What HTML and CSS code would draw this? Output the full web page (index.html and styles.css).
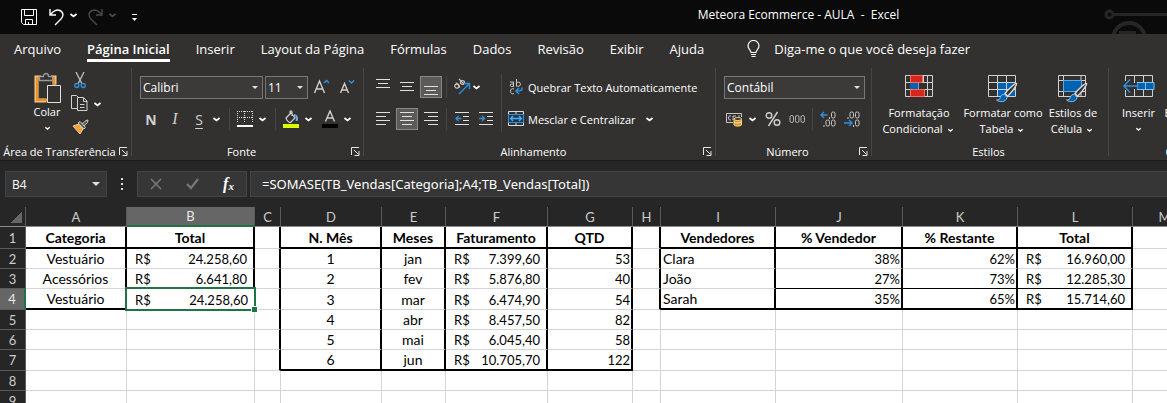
FILE: index.html
```
<!DOCTYPE html>
<html lang="pt-BR">
<head>
    <meta charset="UTF-8">
    <meta name="viewport" content="width=device-width, initial-scale=1.0">
    <title>Meteora Ecommerce - AULA - Excel</title>
    <link rel="stylesheet" href="styles.css">
</head>
<body>
    <!-- shared shapes -->
    <svg class="defs" aria-hidden="true">
        <symbol id="chevron" viewBox="0 0 11 22"><path d="M2.500 10l3 2.500 3-2.500" fill="none" stroke="#fff" stroke-width="1.700"/></symbol>
        <symbol id="launch" viewBox="0 0 9 9"><path d="M.500 8V.500H8M3 3l4.500 4.500M8 4v4.500H3.500" fill="none" stroke="#e8e8e8"/></symbol>
        <symbol id="brush" viewBox="0 0 23 21"><path d="M21.500 1.500c1 1-6 10.500-9 12.500l-2.500-2.500c2-3 10.500-11 11.500-10z" fill="#323130" stroke="#d8d8d8" stroke-width="1.500"/><path d="M9.500 12.500c-2-.500-4 1-4.200 3-.3 2-1.800 2.500-3.800 2.500 3 2.500 9.500 2.500 10.500-2.500z" fill="#0063b1" stroke="#83beec"/></symbol>
    </svg>

    <header class="titlebar">
        <div class="quick">
            <button aria-label="Salvar"><svg width="17" height="17" viewBox="0 0 17 17" fill="none" stroke="#fff"><path d="M.500.500h15v15h-13l-2-2zM3.500.500v6h9v-6M4.500 15.500v-5h7v5M7.500 13v2.500"/></svg></button>
            <button aria-label="Desfazer"><svg width="28" height="17" viewBox="0 0 28 17" fill="none" stroke="#fff"><path d="M1 0v6h6M1.500 5.500C4 2 8 0 11 1.500c4 2 3.500 6 1 8.500L6 16" stroke-width="1.400"/><path d="M21.500 5l3 2.500 3-2.500" stroke-width="1.700"/></svg></button>
            <button aria-label="Refazer"><svg width="28" height="17" viewBox="0 0 28 17" fill="none" stroke="#4a4a4a"><path d="M14 0v6H8M13.500 5.500C11 2 7 0 4 1.500 0 3.500.500 7.500 3 10l6 6" stroke-width="1.400"/><path d="M21.500 5l3 2.500 3-2.500" stroke-width="1.700"/></svg></button>
            <button aria-label="Personalizar"><svg width="7" height="17" viewBox="0 0 7 17"><path d="M1 5.500h5" stroke="#fff"/><path d="M1 9h5l-2.500 3z" fill="#fff"/></svg></button>
        </div>
        <h1>Meteora Ecommerce - AULA &nbsp;-&nbsp; Excel</h1>
        <svg class="art" width="64" height="34" viewBox="0 0 64 34" fill="none" stroke="#262626">
            <circle cx="6.500" cy="14.500" r="3.500" stroke-width="3"/><path d="M10 14.500h54" stroke-width="3"/>
            <circle cx="26" cy="39" r="16" stroke-width="4"/><path d="M16 33h17" stroke-width="4"/>
        </svg>
    </header>

    <nav class="tabs">
        <button>Arquivo</button>
        <button class="active">Página Inicial</button>
        <button>Inserir</button>
        <button>Layout da Página</button>
        <button>Fórmulas</button>
        <button>Dados</button>
        <button>Revisão</button>
        <button>Exibir</button>
        <button>Ajuda</button>
        <button class="tell"><svg width="13" height="18" viewBox="0 0 13 18" fill="none" stroke="#fff"><path d="M4 12.500c0-2-3-3.500-3-6.500a5.500 5.500 0 0 1 11 0c0 3-3 4.500-3 6.500zM4 14.500h5M4.500 16.500h4" stroke-width="1.200"/></svg>Diga-me o que você deseja fazer</button>
    </nav>

    <div class="ribbon">
        <section class="group clipboard">
            <div class="tools">
                <button class="big"><svg width="30" height="32" viewBox="0 0 30 32"><path d="M9 5.500H4.500v23h10M19 5.500h3.500v7" fill="none" stroke="#f7cf8c" stroke-width="4"/><path d="M9 6H5v22h10M19 6h3v7" fill="none" stroke="#e8912d" stroke-width="2.500"/><path d="M7.500 8.500v-4h4c0-4 5-4 5 0h4v4z" fill="#323130" stroke="#9a9a9a" stroke-width="1.300"/><path d="M15.500 13.500h13v17h-13z" fill="#323130" stroke="#e0e0e0"/></svg>
                    <span>Colar</span><svg width="11" height="16"><use href="#chevron"/></svg></button>
                <div class="stack">
                    <button aria-label="Recortar"><svg width="12" height="17" viewBox="0 0 12 17" fill="none"><path d="M2 0l6 12M10 0L4 12" stroke="#b8b8b8" stroke-width="1.400"/><circle cx="2.800" cy="13.500" r="2" stroke="#2f8fdb" stroke-width="1.400"/><circle cx="9.200" cy="13.500" r="2" stroke="#2f8fdb" stroke-width="1.400"/></svg></button>
                    <button class="split" aria-label="Copiar"><svg width="17" height="17" viewBox="0 0 17 17" fill="#323130" stroke="#d0d0d0"><path d="M6 13.500H.500V.500h5l3 3"/><path d="M6.500 2.500h6l3.500 3.500v9.500H6.500zM12.500 2.500v4H16M9 9.500h4.500M9 12.500h4.500"/></svg><svg width="11" height="22"><use href="#chevron"/></svg></button>
                    <button aria-label="Pincel de Formatação"><svg width="17" height="16" viewBox="0 0 17 16"><path d="M1 7l6-2 4 5-3 5z" fill="#f0a33c" stroke="#f8cf91"/><path d="M6 4l2-1.500 5.500 6L12 10zM10 5l4-3.500 2-.500-.500 2.500-3.500 3.500" fill="#555" stroke="#ccc"/></svg></button>
                </div>
            </div>
            <footer><span>Área de Transferência</span><button aria-label="Opções"><svg width="9" height="9"><use href="#launch"/></svg></button></footer>
        </section>

        <section class="group font">
            <div class="tools rows">
                <div class="row">
                    <span class="combo name"><select aria-label="Fonte"><option>Calibri</option></select></span>
                    <span class="combo size"><select aria-label="Tamanho"><option>11</option></select></span>
                    <button aria-label="Aumentar fonte"><svg width="18" height="18" viewBox="0 0 18 18" fill="none"><path d="M1.500 15l5-12 5 12M3.500 11h6" stroke="#d0d0d0" stroke-width="1.400"/><path d="M11 5l2.500-2.500L16 5" stroke="#2f8fdb" stroke-width="1.500"/></svg></button>
                    <button aria-label="Diminuir fonte"><svg width="18" height="18" viewBox="0 0 18 18" fill="none"><path d="M2.500 15l4-9.500 4 9.500M4 12h5" stroke="#d0d0d0" stroke-width="1.400"/><path d="M11 2.500L13.500 5 16 2.500" stroke="#2f8fdb" stroke-width="1.500"/></svg></button>
                </div>
                <div class="row format">
                    <button class="bold">N</button>
                    <button class="italic">I</button>
                    <button class="under">S</button><button class="drop" aria-label="Sublinhado"><svg width="11" height="22"><use href="#chevron"/></svg></button>
                    <i class="sep"></i>
                    <button aria-label="Bordas"><svg width="16" height="16" viewBox="0 0 16 16" fill="none" stroke="#d8d8d8"><path d="M.500 0v12M15.500 0v12M0 .500h16M7.500 0v12M0 6.500h16" stroke-dasharray="1 1"/><path d="M0 15h16" stroke="#fff" stroke-width="2"/></svg></button><button class="drop" aria-label="Mais bordas"><svg width="11" height="22"><use href="#chevron"/></svg></button>
                    <i class="sep"></i>
                    <button aria-label="Cor de preenchimento"><svg width="16" height="18" viewBox="0 0 16 18"><path d="M3 8l5-5 4 5-4.500 4.500c-1 .5-4-2-4.500-4.500zM7 5V1.500c1-1 2-.5 2 .5v4" fill="none" stroke="#d0d0d0" stroke-width="1.200"/><path d="M11 5c3 0 3.500 3 2.500 6" fill="none" stroke="#69aee8" stroke-width="2"/><path d="M0 14h16v4H0z" fill="#dcff00"/></svg></button><button class="drop" aria-label="Mais cores"><svg width="11" height="22"><use href="#chevron"/></svg></button>
                    <button class="fontcolor" aria-label="Cor da fonte"><svg width="16" height="18" viewBox="0 0 16 18"><path d="M3.500 11.500L8 1l4.500 10.500M5 8h6" fill="none" stroke="#d0d0d0" stroke-width="1.400"/><path d="M0 14h16v4H0z"/></svg></button><button class="drop" aria-label="Mais cores de fonte"><svg width="11" height="22"><use href="#chevron"/></svg></button>
                </div>
            </div>
            <footer><span>Fonte</span><button aria-label="Opções"><svg width="9" height="9"><use href="#launch"/></svg></button></footer>
        </section>

        <section class="group align">
            <div class="tools">
                <div class="rows">
                    <div class="row">
                        <button aria-label="Alinhar em cima"><svg width="14" height="16" viewBox="0 0 14 16" stroke="#e0e0e0"><path d="M0 .500h14M2 4.500h10M0 8.500h14"/></svg></button>
                        <button aria-label="Alinhar no meio"><svg width="14" height="16" viewBox="0 0 14 16" stroke="#e0e0e0"><path d="M0 3.500h14M2 7.500h10M0 11.500h14"/></svg></button>
                        <button class="on" aria-label="Alinhar embaixo"><svg width="14" height="16" viewBox="0 0 14 16" stroke="#e0e0e0"><path d="M0 7.500h14M2 11.500h10M0 15.500h14"/></svg></button>
                        <i class="sep"></i>
                        <button class="split" aria-label="Orientação"><svg width="18" height="18" viewBox="0 0 18 18" fill="none"><g stroke="#c8c8c8" stroke-width="1.200"><circle cx="4" cy="8" r="2.200"/><path d="M3 4.500l4 5M6 1l5 5"/><circle cx="9.500" cy="4.500" r="2"/></g><path d="M6 16L16 6M11 5.500h5.500V11" stroke="#2f8fdb" stroke-width="1.400"/></svg><svg width="11" height="22"><use href="#chevron"/></svg></button>
                    </div>
                    <div class="row">
                        <button aria-label="Esquerda"><svg width="14" height="14" viewBox="0 0 14 14" stroke="#e0e0e0"><path d="M0 .500h14M0 4.500h10M0 8.500h14M0 12.500h10"/></svg></button>
                        <button class="on" aria-label="Centralizar"><svg width="14" height="14" viewBox="0 0 14 14" stroke="#e0e0e0"><path d="M0 .500h14M2 4.500h10M0 8.500h14M2 12.500h10"/></svg></button>
                        <button aria-label="Direita"><svg width="14" height="14" viewBox="0 0 14 14" stroke="#e0e0e0"><path d="M0 .500h14M4 4.500h10M0 8.500h14M4 12.500h10"/></svg></button>
                        <i class="sep"></i>
                        <button aria-label="Diminuir recuo"><svg width="14" height="14" viewBox="0 0 14 14" fill="none" stroke="#e0e0e0"><path d="M0 .500h14M8 4.500h6M8 8.500h6M0 12.500h14"/><path d="M6.500 6.500H1M3.500 4L1 6.500 3.500 9" stroke="#2f8fdb" stroke-width="1.400"/></svg></button>
                        <button aria-label="Aumentar recuo"><svg width="14" height="14" viewBox="0 0 14 14" fill="none" stroke="#e0e0e0"><path d="M0 .500h14M8 4.500h6M8 8.500h6M0 12.500h14"/><path d="M0 6.500h5.500M3 4l2.500 2.500L3 9" stroke="#2f8fdb" stroke-width="1.400"/></svg></button>
                    </div>
                </div>
                <i class="sep tall"></i>
                <div class="rows">
                    <button class="wide"><svg width="16" height="16" viewBox="0 0 16 16" fill="none" stroke="#c8c8c8"><path d="M2 3h3.500v4.500H3.500a1.200 1.200 0 0 1 0-2.500H5.500M8.500 0v7.500M8.500 4c1-1.500 4-1 4 1.200s-3 2.800-4 1.300M6 10c-2-1-3.500 0-3.500 2.200S4 15.500 6 14.500"/><path d="M14 8.500c.5 3-1 3.500-5.500 3.500M11 9l-3 3 3 3" stroke="#2f8fdb" stroke-width="1.600"/></svg>Quebrar Texto Automaticamente</button>
                    <button class="wide"><svg width="16" height="16" viewBox="0 0 16 16" fill="none" stroke="#e0e0e0"><path d="M.500.500h15v14H.500zM8 0v3M8 12v3"/><path d="M.500 3.500h15v8H.500z" fill="#1c3b52" stroke="#2f8fdb"/><path d="M3 7.500h10M5 5L2.500 7.500 5 10M11 5l2.500 2.500L11 10" stroke="#53a9ea" stroke-width="1.300"/></svg>Mesclar e Centralizar<svg class="more" width="11" height="22"><use href="#chevron"/></svg></button>
                </div>
            </div>
            <footer><span>Alinhamento</span><button aria-label="Opções"><svg width="9" height="9"><use href="#launch"/></svg></button></footer>
        </section>

        <section class="group number">
            <div class="tools rows">
                <span class="combo"><select aria-label="Formato de número"><option>Contábil</option></select></span>
                <div class="row">
                    <button class="split" aria-label="Moeda"><svg width="17" height="15" viewBox="0 0 17 15" fill="none"><path d="M15.500 5V1.500H.500v9H7M5 4c-2-.5-2.500.5-2.500 2S3.500 8.300 5 8M7 8V4h3M12 4h2" stroke="#c8c8c8"/><path d="M8 7v6c1.500 1.500 6 1.500 7.500 0V7" fill="#d99a28" stroke="#f7d48e"/><ellipse cx="11.800" cy="7" rx="3.800" ry="1.500" fill="#323130" stroke="#f7d48e"/><path d="M8 10c1.500 1.300 6 1.300 7.500 0" stroke="#fbe3b4"/></svg><svg width="11" height="22"><use href="#chevron"/></svg></button>
                    <button aria-label="Porcentagem"><svg width="16" height="16" viewBox="0 0 16 16" fill="none" stroke="#d0d0d0" stroke-width="1.400"><circle cx="4" cy="4.500" r="2.800"/><circle cx="12" cy="11.500" r="2.800"/><path d="M12.500 1L3.500 15"/></svg></button>
                    <button aria-label="Milhares"><svg width="16" height="10" viewBox="0 0 16 10" fill="none" stroke="#b8b8b8"><rect x="1" y="1.500" width="3.500" height="7" rx="1.700"/><rect x="6.500" y="1.500" width="3.500" height="7" rx="1.700"/><rect x="12" y="1.500" width="3.500" height="7" rx="1.700"/></svg></button>
                    <i class="sep"></i>
                    <button aria-label="Aumentar casas decimais"><svg width="16" height="16" viewBox="0 0 16 16" fill="none" stroke="#c8c8c8"><path d="M7.500 4H1M4 1L1 4l3 3" stroke="#2f8fdb" stroke-width="1.400"/><rect x="11.500" y="1" width="3.500" height="6" rx="1.500"/><rect x="6" y="9" width="3.500" height="6" rx="1.500"/><rect x="11.500" y="9" width="3.500" height="6" rx="1.500"/><path d="M9.500 6v2M4 14v2"/></svg></button>
                    <button aria-label="Diminuir casas decimais"><svg width="16" height="16" viewBox="0 0 16 16" fill="none" stroke="#c8c8c8"><path d="M0 12h8M5 9l3 3-3 3" stroke="#2f8fdb" stroke-width="1.400"/><rect x="6" y="1" width="3.500" height="6" rx="1.500"/><rect x="11.500" y="1" width="3.500" height="6" rx="1.500"/><rect x="11.500" y="9" width="3.500" height="6" rx="1.500"/><path d="M4 6v2M9.500 14v2"/></svg></button>
                </div>
            </div>
            <footer><span>Número</span><button aria-label="Opções"><svg width="9" height="9"><use href="#launch"/></svg></button></footer>
        </section>

        <section class="group styles">
            <div class="tools">
                <button class="big wide2"><svg width="30" height="30" viewBox="0 0 30 30"><path d="M1.500.500h27v21h-27zM6.500 0v22M19.500 0v22M23.500 0v22M1 7.500h27M1 14.500h27" fill="none" stroke="#d0d0d0"/><path d="M6.500.500h12v7h-12zM6.500 14.500h14v7h-14z" fill="#d9261c" stroke="#ff6a60"/><path d="M6 8h9v6H6z" fill="#0063b1"/><path d="M15 8h8v6h-8z" fill="#323130"/><path d="M14.500 8v6" stroke="#5ba9e6"/></svg>
                    <span>Formatação<br>Condicional<svg width="11" height="16"><use href="#chevron"/></svg></span></button>
                <button class="big wide2"><svg width="30" height="30" viewBox="0 0 30 30"><path d="M10 8h18v14H10z" fill="#0063b1"/><path d="M.500.500h27v21H.500zM9.500 0v22M18.500 0v22M0 7.500h28M0 14.500h28" fill="none" stroke="#d0d0d0"/><use href="#brush" x="7" y="7" width="23" height="21"/></svg>
                    <span>Formatar como<br>Tabela<svg width="11" height="16"><use href="#chevron"/></svg></span></button>
                <button class="big mid"><svg width="30" height="30" viewBox="0 0 30 30"><path d="M.500.500h27v21H.500zM5.500 0v22M23 0v22M0 5.500h28M0 16.500h28" fill="none" stroke="#d0d0d0"/><path d="M5.500 5.500h18v11h-18z" fill="#0063b1" stroke="#5ba9e6"/><use href="#brush" x="7" y="7" width="23" height="21"/></svg>
                    <span>Estilos de<br>Célula<svg width="11" height="16"><use href="#chevron"/></svg></span></button>
            </div>
            <footer><span>Estilos</span></footer>
        </section>

        <section class="group cells">
            <div class="tools">
                <button class="big small"><svg width="32" height="30" viewBox="0 0 32 30" fill="none"><path d="M2.500 6V.500h27v21h-27V15M11.500 0v22M20.500 0v22" stroke="#d0d0d0"/><path d="M14 7.500h17v7H14z" fill="#0063b1" stroke="#83beec"/><path d="M22.500 7v7" stroke="#83beec"/><path d="M3 8h11v6H3z" fill="#323130"/><path d="M14 11H1.500M7 4.500L1 11l6 6.500" stroke="#2f8fdb" stroke-width="1.500"/></svg>
                    <span>Inserir</span><svg width="11" height="16"><use href="#chevron"/></svg></button>
                <button class="big small"><svg width="32" height="30" viewBox="0 0 32 30" fill="none"><path d="M2.500.500h27v21h-27zM11.500 0v22M20.500 0v22M2 7.500h27M2 14.500h27" stroke="#d0d0d0"/></svg>
                    <span>Excluir</span><svg width="11" height="16"><use href="#chevron"/></svg></button>
            </div>
            <footer><span>Células</span></footer>
        </section>
    </div>

    <div class="formulabar">
        <div class="namebox"><input aria-label="Caixa de nome" value="B4"></div>
        <svg class="dots" width="3" height="12" viewBox="0 0 3 12" fill="#e0e0e0"><path d="M0 0h2v2H0zM0 5h2v2H0zM0 10h2v2H0z"/></svg>
        <div class="actions">
            <button aria-label="Cancelar"><svg width="12" height="12" viewBox="0 0 12 12"><path d="M1 1l10 10M11 1L1 11" stroke="#777" stroke-width="1.600"/></svg></button>
            <button aria-label="Inserir"><svg width="13" height="12" viewBox="0 0 13 12"><path d="M1 6l4 4 7-9" fill="none" stroke="#777" stroke-width="2.200"/></svg></button>
            <button class="fx" aria-label="Inserir função">f<small>x</small></button>
        </div>
        <input class="formula" aria-label="Fórmula" value="=SOMASE(TB_Vendas[Categoria];A4;TB_Vendas[Total])">
    </div>

    <main class="sheet">
        <table>
            <colgroup>
                <col class="w-head"><col class="w-101"><col class="w-128"><col class="w-26"><col class="w-101"><col class="w-64"><col class="w-102"><col class="w-85"><col class="w-28"><col class="w-115"><col class="w-127"><col class="w-115"><col class="w-115"><col class="w-64">
            </colgroup>
            <thead>
                <tr><th class="corner"></th><th>A</th><th class="sel">B</th><th>C</th><th>D</th><th>E</th><th>F</th><th>G</th><th>H</th><th>I</th><th>J</th><th>K</th><th>L</th><th>M</th></tr>
            </thead>
            <tbody>
                <tr class="tall titles"><th>1</th><td class="br bb">Categoria</td><td class="br bb">Total</td><td class="br"></td><td class="br bb">N. Mês</td><td class="br bb">Meses</td><td class="br bb">Faturamento</td><td class="br bb">QTD</td><td class="br"></td><td class="br bb">Vendedores</td><td class="br bb">% Vendedor</td><td class="br bb">% Restante</td><td class="br bb">Total</td><td></td></tr>
                <tr><th>2</th><td class="c br">Vestuário</td><td class="br money"><div><span>R$</span><span>24.258,60</span></div></td><td class="br"></td><td class="c br">1</td><td class="c br">jan</td><td class="br money"><div><span>R$</span><span>7.399,60</span></div></td><td class="n br">53</td><td class="br"></td><td class="br">Clara</td><td class="n br">38%</td><td class="n br">62%</td><td class="br money"><div><span>R$</span><span>16.960,00</span></div></td><td></td></tr>
                <tr><th>3</th><td class="c br">Acessórios</td><td class="br money"><div><span>R$</span><span>6.641,80</span></div></td><td class="br"></td><td class="c br">2</td><td class="c br">fev</td><td class="br money"><div><span>R$</span><span>5.876,80</span></div></td><td class="n br">40</td><td class="br"></td><td class="br">João</td><td class="n br thin">27%</td><td class="n br thin">73%</td><td class="br thin money"><div><span>R$</span><span>12.285,30</span></div></td><td></td></tr>
                <tr class="tall"><th class="sel">4</th><td class="c br bb">Vestuário</td><td class="active money"><div><span>R$</span><span>24.258,60</span></div></td><td class="br"></td><td class="c br">3</td><td class="c br">mar</td><td class="br money"><div><span>R$</span><span>6.474,90</span></div></td><td class="n br">54</td><td class="br"></td><td class="br bb">Sarah</td><td class="n br bb">35%</td><td class="n br bb">65%</td><td class="br bb money"><div><span>R$</span><span>15.714,60</span></div></td><td></td></tr>
                <tr><th>5</th><td></td><td></td><td class="br"></td><td class="c br">4</td><td class="c br">abr</td><td class="br money"><div><span>R$</span><span>8.457,50</span></div></td><td class="n br">82</td><td></td><td></td><td></td><td></td><td></td><td></td></tr>
                <tr><th>6</th><td></td><td></td><td class="br"></td><td class="c br">5</td><td class="c br">mai</td><td class="br money"><div><span>R$</span><span>6.045,40</span></div></td><td class="n br">58</td><td></td><td></td><td></td><td></td><td></td><td></td></tr>
                <tr class="tall"><th>7</th><td></td><td></td><td class="br"></td><td class="c br bb">6</td><td class="c br bb">jun</td><td class="br bb money"><div><span>R$</span><span>10.705,70</span></div></td><td class="n br bb">122</td><td></td><td></td><td></td><td></td><td></td><td></td></tr>
                <tr><th>8</th><td></td><td></td><td></td><td></td><td></td><td></td><td></td><td></td><td></td><td></td><td></td><td></td><td></td></tr>
                <tr><th>9</th><td></td><td></td><td></td><td></td><td></td><td></td><td></td><td></td><td></td><td></td><td></td><td></td><td></td></tr>
            </tbody>
        </table>
    </main>
</body>
</html>
```
FILE: styles.css
```
* {
    box-sizing: border-box;
}
body {
    margin: 0;
    height: 100vh;
    display: flex;
    flex-direction: column;
    overflow: hidden;
    background: #fff;
    color: #fff;
    font-family: "Open Sans", "Segoe UI", sans-serif;
    font-size: 11px;
}
.defs {
    display: none;
}
button, input, select {
    font: inherit;
    color: inherit;
    background: none;
    border: none;
    padding: 0;
    margin: 0;
}
svg {
    display: block;
    flex: none;
}

/* title bar */
.titlebar {
    display: flex;
    align-items: center;
    flex: none;
    height: 34px;
    background: #0a0a0a;
}
.quick {
    display: flex;
    gap: 11px;
    padding-left: 21px;
}
.quick button:last-child {
    margin-left: 4px;
}
.titlebar h1 {
    flex: 1;
    margin: 0 0 0 356px;
    padding-bottom: 4px;
    font-size: 12px;
    line-height: 16px;
    font-weight: normal;
    text-align: center;
    white-space: nowrap;
}

/* tabs */
.tabs {
    display: flex;
    flex: none;
    gap: 26px;
    height: 34px;
    padding: 2px 14px 0;
    background: #323130;
    font-size: 13px;
}
.tabs button {
    height: 26px;
    white-space: nowrap;
}
.tabs .active {
    font-weight: 600;
    border-bottom: 3px solid #fff;
    padding-top: 3px;
}
.tabs .tell {
    display: flex;
    align-items: center;
    gap: 14px;
    margin-left: 17px;
}

/* ribbon */
.ribbon {
    display: flex;
    flex: none;
    height: 93px;
    background: #323130;
    border-bottom: 1px solid #1b1b1b;
}
.group {
    position: relative;
    flex: none;
    display: flex;
    flex-direction: column;
}
.group::after {
    content: "";
    position: absolute;
    right: 0;
    top: 0;
    height: 88px;
    width: 1px;
    background: #484644;
}
.clipboard { width: 132px; }
.font { width: 232px; }
.align { width: 352px; }
.number { width: 156px; }
.styles { width: 237px; }
.cells { width: 154px; }
.tools {
    display: flex;
    flex: 1;
    padding-top: 8px;
}
.rows {
    display: flex;
    flex-direction: column;
    gap: 10px;
}
.rows > * {
    flex: none;
}
.row {
    display: flex;
    gap: 2px;
    height: 22px;
}
.row button {
    display: flex;
    align-items: center;
    justify-content: center;
    width: 22px;
    height: 22px;
}
.row .on {
    background: #5c5b5a;
    border: 1px solid #8a8886;
}
.row .split {
    width: 33px;
}
.sep {
    flex: none;
    width: 1px;
    height: 22px;
    margin: 0 2px;
    background: #484644;
}
.sep.tall {
    height: 58px;
    margin: -2px 5px 0 4px;
}
.group footer {
    display: flex;
    align-items: center;
    height: 17px;
    padding-right: 4px;
}
.group footer span {
    flex: 1;
    text-align: center;
    white-space: nowrap;
}
.big {
    display: flex;
    flex-direction: column;
    align-items: center;
    line-height: 16px;
    white-space: nowrap;
}
.big span svg {
    display: inline-block;
    vertical-align: middle;
    margin-left: 2px;
}
.stack {
    display: flex;
    flex-direction: column;
    align-items: flex-start;
    gap: 6px;
}
.stack button {
    display: flex;
    align-items: center;
    justify-content: center;
    width: 22px;
    height: 17px;
}
.stack .split {
    width: 36px;
    gap: 4px;
}
.clipboard .tools {
    padding: 4px 0 0 30px;
    gap: 5px;
}
.clipboard .big {
    width: 34px;
}

.font .tools {
    padding-left: 8px;
}
.font .row button {
    margin-left: 1px;
}
.font .format {
    gap: 0;
    margin-left: -1px;
}
.font .format button {
    width: 24px;
    margin: 0;
    font-size: 14px;
    color: #d0d0d0;
}
.font .format .drop {
    width: 11px;
}
.font .format .sep {
    margin: 0 3px 0 7px;
}
.font .format .fontcolor {
    margin-left: 4px;
}
.font .format .bold {
    font-weight: bold;
}
.font .format .italic {
    font-family: "Liberation Serif", serif;
    font-style: italic;
    font-size: 16px;
}
.font .format .under {
    text-decoration: underline;
    text-underline-offset: 3px;
}
.combo {
    position: relative;
    display: block;
    height: 23px;
    margin-bottom: -1px;
    font-size: 12px;
}
.combo select {
    appearance: none;
    display: block;
    width: 100%;
    height: 23px;
    padding: 0 2px;
    background: #3b3a39;
    border: 1px solid #797775;
}
.combo::after,
.namebox::after {
    content: "";
    position: absolute;
    right: 5px;
    top: 10px;
    border: 3px solid transparent;
    border-top-color: #e0e0e0;
    border-bottom: none;
}
.combo.name { width: 123px; }
.combo.size { width: 43px; }

.align .tools {
    padding-left: 8px;
}
.wide {
    display: flex;
    align-items: center;
    gap: 4px;
    height: 22px;
    margin-left: 1px;
    white-space: nowrap;
}
.wide .more {
    margin-left: 4px;
}

.number .tools {
    padding-left: 8px;
}
.number .combo {
    width: 141px;
}
.number .row .split {
    width: 36px;
    gap: 4px;
}

.styles .tools {
    padding: 7px 0 0 5px;
}
.wide2 { width: 84px; }
.mid { width: 56px; }
.cells .tools {
    padding: 7px 0 0 8px;
}
.small { width: 43px; }

/* formula bar */
.formulabar {
    display: flex;
    align-items: center;
    flex: none;
    height: 46px;
    padding-left: 5px;
    background: #262626;
    font-size: 12px;
}
.namebox {
    position: relative;
    width: 102px;
    height: 26px;
    background: #363636;
    border: 1px solid #444;
}
.namebox input {
    width: 80px;
    height: 24px;
    padding-left: 6px;
}
.namebox::after {
    border-width: 4px;
    border-bottom: none;
    right: 6px;
}
.dots {
    margin: 0 13px 0 14px;
}
.actions {
    display: flex;
    justify-content: space-around;
    width: 110px;
    height: 26px;
    margin-right: 3px;
    background: #363636;
    border: 1px solid #444;
}
.actions button {
    display: flex;
    align-items: center;
}
.fx {
    font: italic bold 16px "Liberation Serif", serif;
}
.fx small {
    font-size: 11px;
    padding-top: 4px;
}
.formula {
    flex: 1;
    min-width: 0;
    height: 26px;
    padding-left: 11px;
    background: #363636;
    border: 1px solid #444;
    border-right: none;
    font-family: "Noto Sans", sans-serif;
    font-size: 13px;
}

/* sheet */
.sheet {
    flex: 1;
    min-height: 0;
    overflow: hidden;
    background: #fff;
}
table {
    width: 0;
    table-layout: fixed;
    border-collapse: separate;
    border-spacing: 0;
    color: #000;
    font-family: Lato, Calibri, sans-serif;
    font-size: 14px;
    line-height: 16px;
}
.w-head { width: 26px; }
.w-26 { width: 26px; }
.w-28 { width: 28px; }
.w-64 { width: 64px; }
.w-85 { width: 85px; }
.w-101 { width: 101px; }
.w-102 { width: 102px; }
.w-115 { width: 115px; }
.w-127 { width: 127px; }
.w-128 { width: 128px; }
tr {
    height: 20px;
}
tr.tall {
    height: 21px;
}
tr.titles {
    height: 22px;
}
th {
    padding: 0;
    background: #262626;
    border-right: 1px solid #5a5a5a;
    border-bottom: 1px solid #5a5a5a;
    color: #ccc;
    font-size: 13px;
    font-weight: normal;
}
thead th {
    border-bottom-color: #8a8a8a;
}
th.sel {
    background: #666;
    color: #e8e8e8;
}
thead .sel {
    border-bottom: 2px solid #217346;
}
tbody .sel {
    border-right: 2px solid #217346;
}
.corner {
    background: linear-gradient(135deg, transparent 50%, #666 50%) 10px 5px / 12px 11px no-repeat #262626;
}
td {
    padding: 1px 2px 0;
    border-right: 1px solid #d4d4d4;
    border-bottom: 1px solid #d4d4d4;
    white-space: nowrap;
}
.titles td {
    font-weight: bold;
    text-align: center;
}
.c {
    text-align: center;
}
.n {
    font-size: 13px;
    text-align: right;
    padding-right: 1px;
}
.br {
    border-right: 2px solid #000;
}
.bb {
    border-bottom: 2px solid #000;
}
.thin {
    border-bottom: 1px solid #000;
}
.money {
    font-size: 13px;
}
.money div {
    display: flex;
    justify-content: space-between;
    padding: 0 4px 0 6px;
}
.active.money {
    position: relative;
}
.active.money::before {
    content: "";
    position: absolute;
    inset: -2px;
    border: 2px solid #217346;
}
.active.money::after {
    content: "";
    position: absolute;
    right: -3px;
    bottom: -3px;
    width: 5px;
    height: 5px;
    background: #217346;
    outline: 1px solid #fff;
}
```
